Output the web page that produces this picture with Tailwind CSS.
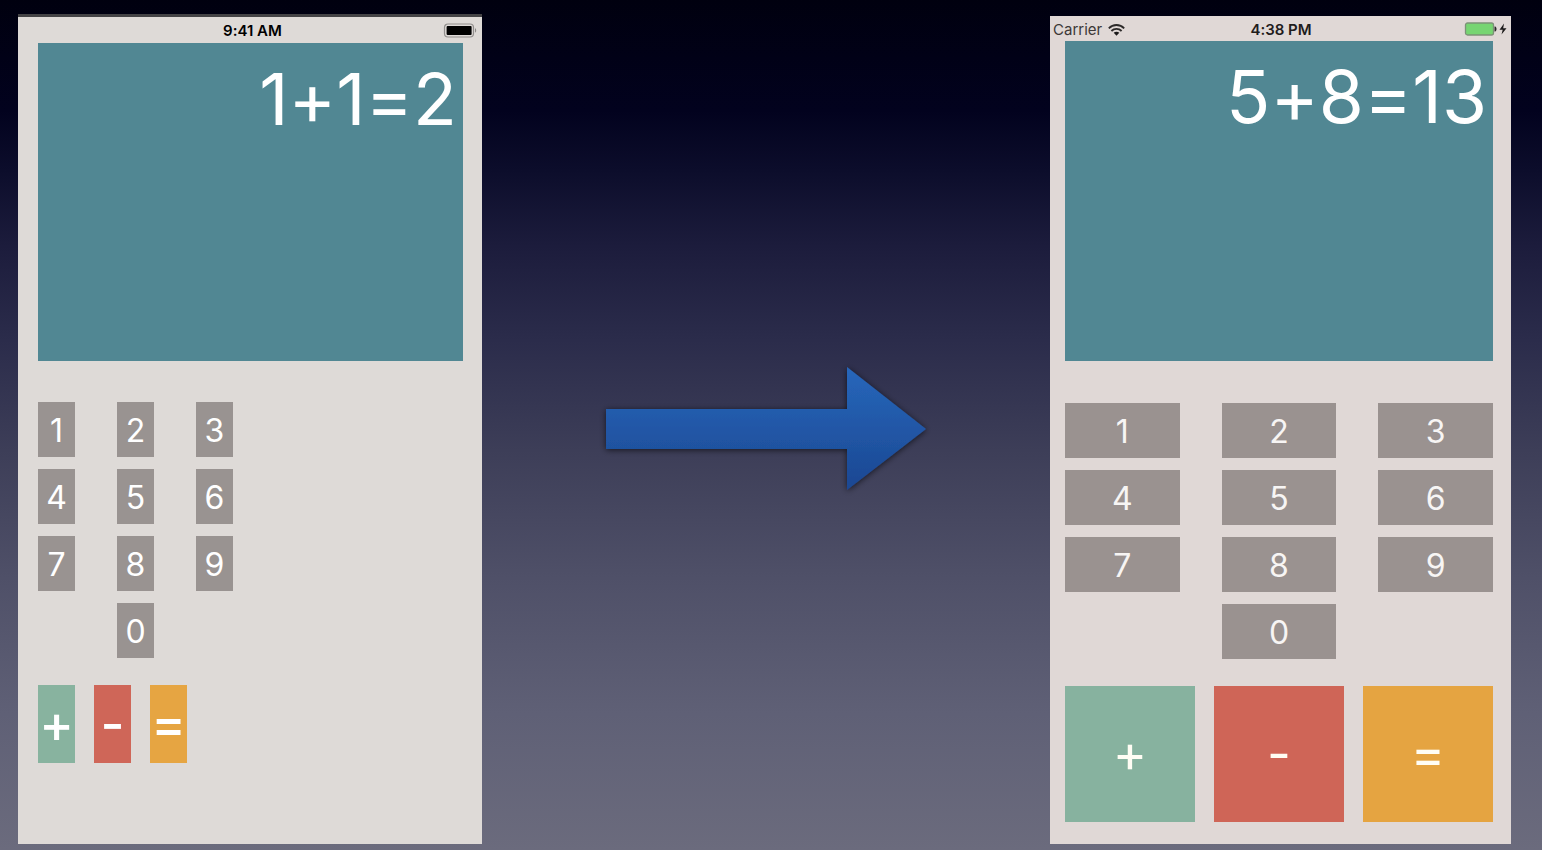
<!DOCTYPE html>
<html lang="en">
<head>
<meta charset="utf-8">
<meta name="viewport" content="width=device-width, initial-scale=1">
<title>Calculator layouts</title>
<script src="https://cdn.jsdelivr.net/npm/@tailwindcss/browser@4"></script>
</head>
<body class="font-['Inter',sans-serif] [font-feature-settings:'calt'_0]">
<main class="flex min-h-screen items-stretch justify-between bg-[linear-gradient(to_bottom,#00000f_0%,#02021e_13%,#0c0d2b_20%,#1c1c3c_29%,#2b2c4b_40%,#3d3e58_53%,#4f5068_68%,#5f6076_84%,#6b6b7d_100%)] pr-[31px] pb-[6px] pl-[18px]">

  <!-- Calculator with narrow keys -->
  <section aria-label="Calculator before" class="mt-[14px] w-[32%] max-w-[464px] border-t-3 border-[#444345] bg-[#dedad7] pr-[19px] pl-5">
    <header class="relative flex h-[26px] items-center justify-center pt-px pl-1">
      <time class="text-[15px] leading-5 font-semibold text-black">9:41 AM</time>
      <svg class="absolute -right-[14px] top-[6px] h-[15px] w-[34px]" viewBox="0 0 34 15" role="img" aria-label="Battery full">
        <rect x="1.5" y="1" width="29" height="13" rx="3.5" fill="none" stroke="#918e8c" stroke-width="1.2"/>
        <rect x="3.6" y="3" width="25" height="9" rx="1" fill="#000"/>
        <path d="M32 5.3v4.4c1.6-.6 1.6-3.8 0-4.4z" fill="#8b8886"/>
      </svg>
    </header>
    <output class="block h-[318px] bg-[#518793] px-[6px] pt-[11px] text-right text-[72px] leading-[90px] text-white">1+1=2</output>
    <div class="mt-[41px] grid grid-cols-[repeat(3,37px)] gap-x-[42px] gap-y-3 text-[32px] leading-[57px] text-white">
      <button class="h-[55px] bg-[#999391]">1</button>
      <button class="h-[55px] bg-[#999391]">2</button>
      <button class="h-[55px] bg-[#999391]">3</button>
      <button class="h-[55px] bg-[#999391]">4</button>
      <button class="h-[55px] bg-[#999391]">5</button>
      <button class="h-[55px] bg-[#999391]">6</button>
      <button class="h-[55px] bg-[#999391]">7</button>
      <button class="h-[55px] bg-[#999391]">8</button>
      <button class="h-[55px] bg-[#999391]">9</button>
      <button class="col-start-2 h-[55px] bg-[#999391]">0</button>
    </div>
    <div class="mt-[27px] grid grid-cols-[repeat(3,37px)] gap-x-[19px] text-[52px] leading-[78px] font-medium text-white">
      <button class="h-[78px] bg-[#88b39f]">+</button>
      <button class="h-[78px] bg-[#cf6658]">-</button>
      <button class="h-[78px] bg-[#e6a542]">=</button>
    </div>
  </section>

  <svg class="mt-[14px] h-[150px] w-[340px] self-center" viewBox="0 0 340 150" role="img" aria-label="becomes">
    <defs>
      <linearGradient id="arrowFill" x1="0" y1="0" x2="0" y2="1">
        <stop offset="0" stop-color="#2767bb"/>
        <stop offset="1" stop-color="#1b4792"/>
      </linearGradient>
      <filter id="arrowShadow" x="-10%" y="-15%" width="120%" height="140%">
        <feDropShadow dx="0" dy="1" stdDeviation="3" flood-color="#000" flood-opacity=".65"/>
      </filter>
    </defs>
    <path d="M10 55H251V13L330 75L251 136V95H10Z" fill="url(#arrowFill)" filter="url(#arrowShadow)"/>
  </svg>

  <!-- Calculator with equal-width keys -->
  <section aria-label="Calculator after" class="mt-4 w-[32%] max-w-[461px] bg-[#e0d8d6] pr-[18px] pl-[15px]">
    <header class="relative flex h-[25px] items-center justify-center pt-[2px] pl-1 text-[15px] leading-5 text-[#3c3838]">
      <div class="absolute -left-3 flex items-center gap-[6px]">
        <span>Carrier</span>
        <svg class="h-3 w-[17px]" viewBox="0 0 17 12" role="img" aria-label="Wi-Fi">
          <g fill="none" stroke="#2c2929" stroke-width="1.8">
            <path d="M.8 4.3C5-.1 12-.1 16.200 4.300"/>
            <path d="M3.400 7C6.200 4.200 10.800 4.200 13.600 7"/>
          </g>
          <path d="M5.700 8.800C7.300 7.400 9.700 7.400 11.300 8.800L8.500 11.700Z" fill="#1c1a1a"/>
        </svg>
      </div>
      <time class="font-semibold text-[#1f1c1c]">4:38 PM</time>
      <svg class="absolute -right-[15px] top-[5px] h-4 w-[44px]" viewBox="0 0 44 16" role="img" aria-label="Battery charging">
        <rect x="1.500" y="2" width="28" height="12" rx="2" fill="#77d572" stroke="#7c9277" stroke-width="1.300"/>
        <path d="M30.500 5.500h.8c1.600.7 1.600 4.300 0 5h-.8z" fill="#2b2929"/>
        <path d="M40 2.500L35.500 8.800H38.700L37.500 13.500L42.500 7.200H39.200Z" fill="#1c1a1a"/>
      </svg>
    </header>
    <output class="block h-[320px] bg-[#518793] px-[6px] pt-[11px] text-right text-[73px] leading-[90px] text-white">5+8=13</output>
    <div class="mt-[42px] grid grid-cols-3 gap-x-[42px] gap-y-3 text-[32px] leading-[57px] text-[#f7f5f4]">
      <button class="h-[55px] bg-[#9a9290]">1</button>
      <button class="h-[55px] bg-[#9a9290]">2</button>
      <button class="h-[55px] bg-[#9a9290]">3</button>
      <button class="h-[55px] bg-[#9a9290]">4</button>
      <button class="h-[55px] bg-[#9a9290]">5</button>
      <button class="h-[55px] bg-[#9a9290]">6</button>
      <button class="h-[55px] bg-[#9a9290]">7</button>
      <button class="h-[55px] bg-[#9a9290]">8</button>
      <button class="h-[55px] bg-[#9a9290]">9</button>
      <button class="col-start-2 h-[55px] bg-[#9a9290]">0</button>
    </div>
    <div class="mt-[27px] grid grid-cols-3 gap-x-[19px] text-[52px] leading-[136px] text-[#fffdf4]">
      <button class="h-[136px] bg-[#87b29f]">+</button>
      <button class="h-[136px] bg-[#cf6557]">-</button>
      <button class="h-[136px] bg-[#e5a441]">=</button>
    </div>
  </section>
</main>
</body>
</html>
